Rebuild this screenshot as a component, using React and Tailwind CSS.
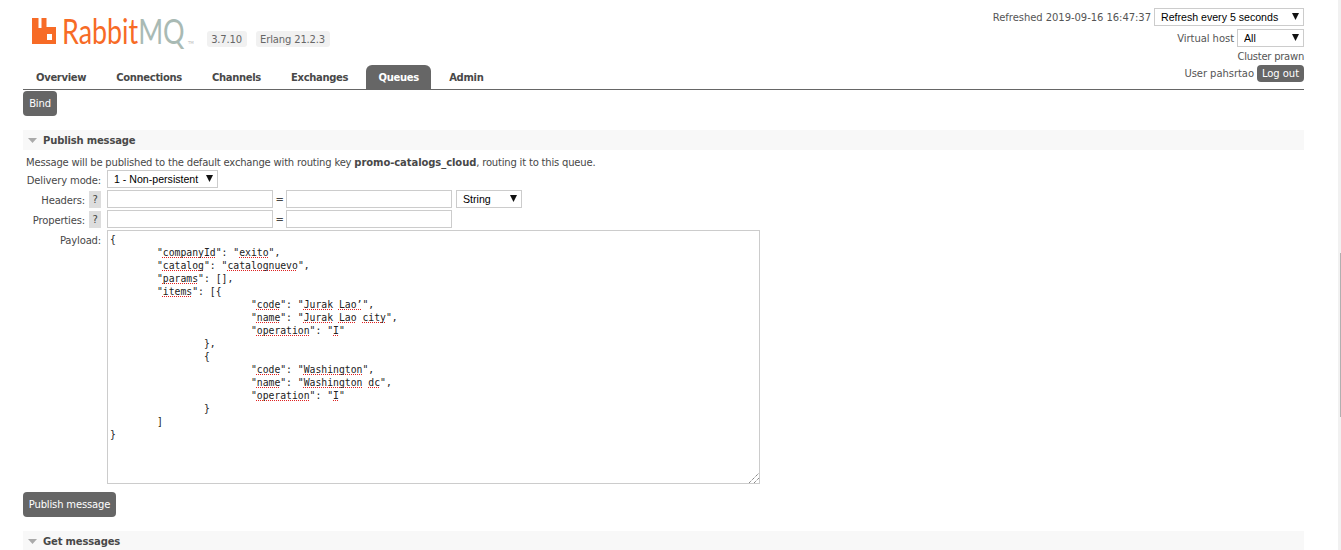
const S = ({ children }) => (
  <span className="underline decoration-dotted decoration-[#e02020] decoration-1 underline-offset-[1px] [text-decoration-skip-ink:none]">{children}</span>
);

const payloadLines = [
  <>{'{'}</>,
  <>{'\t"'}<S>companyId</S>{'": "'}<S>exito</S>{'",'}</>,
  <>{'\t"'}<S>catalog</S>{'": "'}<S>catalognuevo</S>{'",'}</>,
  <>{'\t"'}<S>params</S>{'": [],'}</>,
  <>{'\t"'}<S>items</S>{'": [{'}</>,
  <>{'\t\t\t"'}<S>code</S>{'": "'}<S>Jurak</S> <S>Lao’</S>{'",'}</>,
  <>{'\t\t\t"'}<S>name</S>{'": "'}<S>Jurak</S> <S>Lao</S> <S>city</S>{'",'}</>,
  <>{'\t\t\t"'}<S>operation</S>{'": "'}<S>I</S>{'"'}</>,
  <>{'\t\t},'}</>,
  <>{'\t\t{'}</>,
  <>{'\t\t\t"'}<S>code</S>{'": "'}<S>Washington</S>{'",'}</>,
  <>{'\t\t\t"'}<S>name</S>{'": "'}<S>Washington</S> <S>dc</S>{'",'}</>,
  <>{'\t\t\t"'}<S>operation</S>{'": "'}<S>I</S>{'"'}</>,
  <>{'\t\t}'}</>,
  <>{'\t]'}</>,
  <>{'}'}</>,
];

function Arrow() {
  return (
    <svg viewBox="0 0 8 8" className="pointer-events-none absolute right-[5px] top-[5px] h-[7px] w-[7px]">
      <path d="M0 0h8L4 8z" fill="#111" />
    </svg>
  );
}

function Select({ value, className }) {
  return (
    <div className={`relative h-[18px] ${className}`}>
      <select
        defaultValue={value}
        className="h-full w-full appearance-none rounded-none border border-[#ccc] bg-white pl-[6px] pt-[1px] text-[10.6px] leading-none tracking-normal text-black [font-family:'Liberation_Sans',sans-serif]"
      >
        <option>{value}</option>
      </select>
      <Arrow />
    </div>
  );
}

function TextInput() {
  return <input type="text" className="h-[18px] w-[166px] border border-[#ccc] bg-white" />;
}

function Help() {
  return <span className="flex h-[17px] w-[12px] items-center justify-center bg-[#ddd] pt-[1px] text-[10px] text-[#444]">?</span>;
}

function SectionHeader({ children }) {
  return (
    <div className="flex h-[20px] items-center bg-[#f8f8f8] pl-[5px] text-[10px] font-bold text-[#484848]">
      <svg viewBox="0 0 9 5" className="mr-[6px] h-[5px] w-[9px]">
        <path d="M0 0h9L4.500 5z" fill="#aaa" />
      </svg>
      <span className="pt-[1px]">{children}</span>
    </div>
  );
}

function Tab({ children, active }) {
  return active ? (
    <span className="flex h-[24px] w-[65px] items-center justify-center rounded-t-[6px] bg-[#666] text-white">{children}</span>
  ) : (
    <span className="flex h-[24px] items-center text-[#484848]">{children}</span>
  );
}

function Button({ children, className }) {
  return (
    <button type="button" className={`flex h-[25px] items-center justify-center rounded-[4px] bg-[#666] text-[10px] text-white ${className}`}>
      {children}
    </button>
  );
}

function Row({ label, help, children }) {
  return (
    <div className="mt-[2px] flex items-start first:mt-0">
      <div className="flex h-[18px] w-[84px] items-center justify-end gap-[4px] pr-[6px] text-[#484848]">
        <span className="pt-[3px] whitespace-nowrap">{label}</span>
        {help && <Help />}
      </div>
      {children}
    </div>
  );
}

export default function App() {
  return (
    <div className="relative flex h-[550px] w-[1341px] overflow-hidden bg-white text-[10px] tracking-[-0.16px] text-[#484848] [font-family:'DejaVu_Sans',sans-serif]">
      <div className="ml-[23px] w-[1281px] shrink-0">
        <header className="flex h-[65px] justify-between">
          <div className="flex items-start pl-[9px] pt-[14px]">
            <svg viewBox="0 0 24 26" className="mt-[4px] h-[26px] w-[24px]">
              <path
                fill="#f76b26"
                fillRule="evenodd"
                d="M0 0h6.500v10h3V0h5v9h9.500v17H0z M15 16v6h5v-6z"
              />
            </svg>
            <div className="ml-[6px] h-[34px] w-[125px]">
              <span className="inline-block origin-left scale-x-[0.79] text-[34px] leading-[34px] font-normal tracking-normal whitespace-nowrap text-[#f76b26] [font-family:Lato,sans-serif]">
                Rabbit<span className="text-[#a9bab4]">MQ</span>
              </span>
            </div>
            <span className="ml-[1px] mt-[26px] text-[4px] text-[#bbb]">TM</span>
            <span className="ml-[13px] mt-[17px] flex h-[16px] w-[40px] items-center justify-center rounded-[3px] bg-[#f1f1f1] text-[#666]">3.7.10</span>
            <span className="ml-[9px] mt-[17px] flex h-[16px] w-[74px] items-center justify-center rounded-[3px] bg-[#f1f1f1] text-[#666]">Erlang 21.2.3</span>
          </div>
          <div className="flex flex-col items-end pt-[8px] tracking-[-0.05px] text-[#555]">
            <div className="flex items-center gap-[3px]">
              <span>Refreshed 2019-09-16 16:47:37</span>
              <Select value="Refresh every 5 seconds" className="w-[150px]" />
            </div>
            <div className="mt-[3px] flex items-center gap-[3px]">
              <span>Virtual host</span>
              <Select value="All" className="w-[67px]" />
            </div>
          </div>
        </header>
        <nav className="relative flex h-[25px] items-end gap-[30px] border-b border-[#666] pl-[13px] font-bold tracking-[-0.32px]">
          <Tab>Overview</Tab>
          <Tab>Connections</Tab>
          <Tab>Channels</Tab>
          <Tab>Exchanges</Tab>
          <span className="-mx-[12px]"><Tab active>Queues</Tab></span>
          <Tab>Admin</Tab>
          <div className="absolute bottom-[7px] right-0 flex flex-col items-end font-normal tracking-[-0.05px] text-[#555]">
            <span className="mb-[2px] leading-[13px] tracking-[-0.25px]">Cluster prawn</span>
            <div className="flex items-center gap-[3px]">
              <span>User pahsrtao</span>
              <button type="button" className="flex h-[17px] w-[47px] items-center justify-center rounded-[4px] bg-[#666] text-white">Log out</button>
            </div>
          </div>
        </nav>
        <Button className="mt-[1px] w-[34px]">Bind</Button>
        <section className="mt-[14px]">
          <SectionHeader>Publish message</SectionHeader>
          <p className="mt-[5px] h-[15px] pl-[3px] leading-[15px] tracking-[-0.19px]">
            Message will be published to the default exchange with routing key <b className="tracking-[-0.08px]">promo-catalogs_cloud</b>, routing it to this queue.
          </p>
          <div>
            <Row label="Delivery mode:">
              <Select value="1 - Non-persistent" className="w-[111px]" />
            </Row>
            <Row label="Headers:" help>
              <TextInput />
              <span className="flex h-[18px] w-[13px] items-center justify-center">=</span>
              <TextInput />
              <Select value="String" className="ml-[4px] w-[66px]" />
            </Row>
            <Row label="Properties:" help>
              <TextInput />
              <span className="flex h-[18px] w-[13px] items-center justify-center">=</span>
              <TextInput />
            </Row>
            <Row label="Payload:">
              <div className="relative h-[254px] w-[653px] border border-[#ccc] bg-white pl-[2px] pt-[2px] text-[9.75px] leading-[13px] tracking-normal whitespace-pre text-[#222] [font-family:'DejaVu_Sans_Mono',monospace] [tab-size:8]">
                {payloadLines.map((line, index) => (
                  <div key={index} className="h-[13px]">{line}</div>
                ))}
                <svg viewBox="0 0 10 10" className="absolute bottom-0 right-0 h-[10px] w-[10px]">
                  <path d="M0 10L10 0M5 10L10 5" stroke="#555" strokeWidth="1" strokeDasharray="1 1" />
                </svg>
              </div>
            </Row>
          </div>
          <Button className="mt-[8px] w-[93px]">Publish message</Button>
        </section>
        <section className="mt-[14px]">
          <SectionHeader>Get messages</SectionHeader>
        </section>
      </div>
      <div className="absolute right-0 top-0 h-[550px] w-[3px] bg-[#f1f1f1]">
        <div className="ml-auto mt-[253px] h-[164px] w-[1px] bg-[#b0b0b0]" />
      </div>
    </div>
  );
}
